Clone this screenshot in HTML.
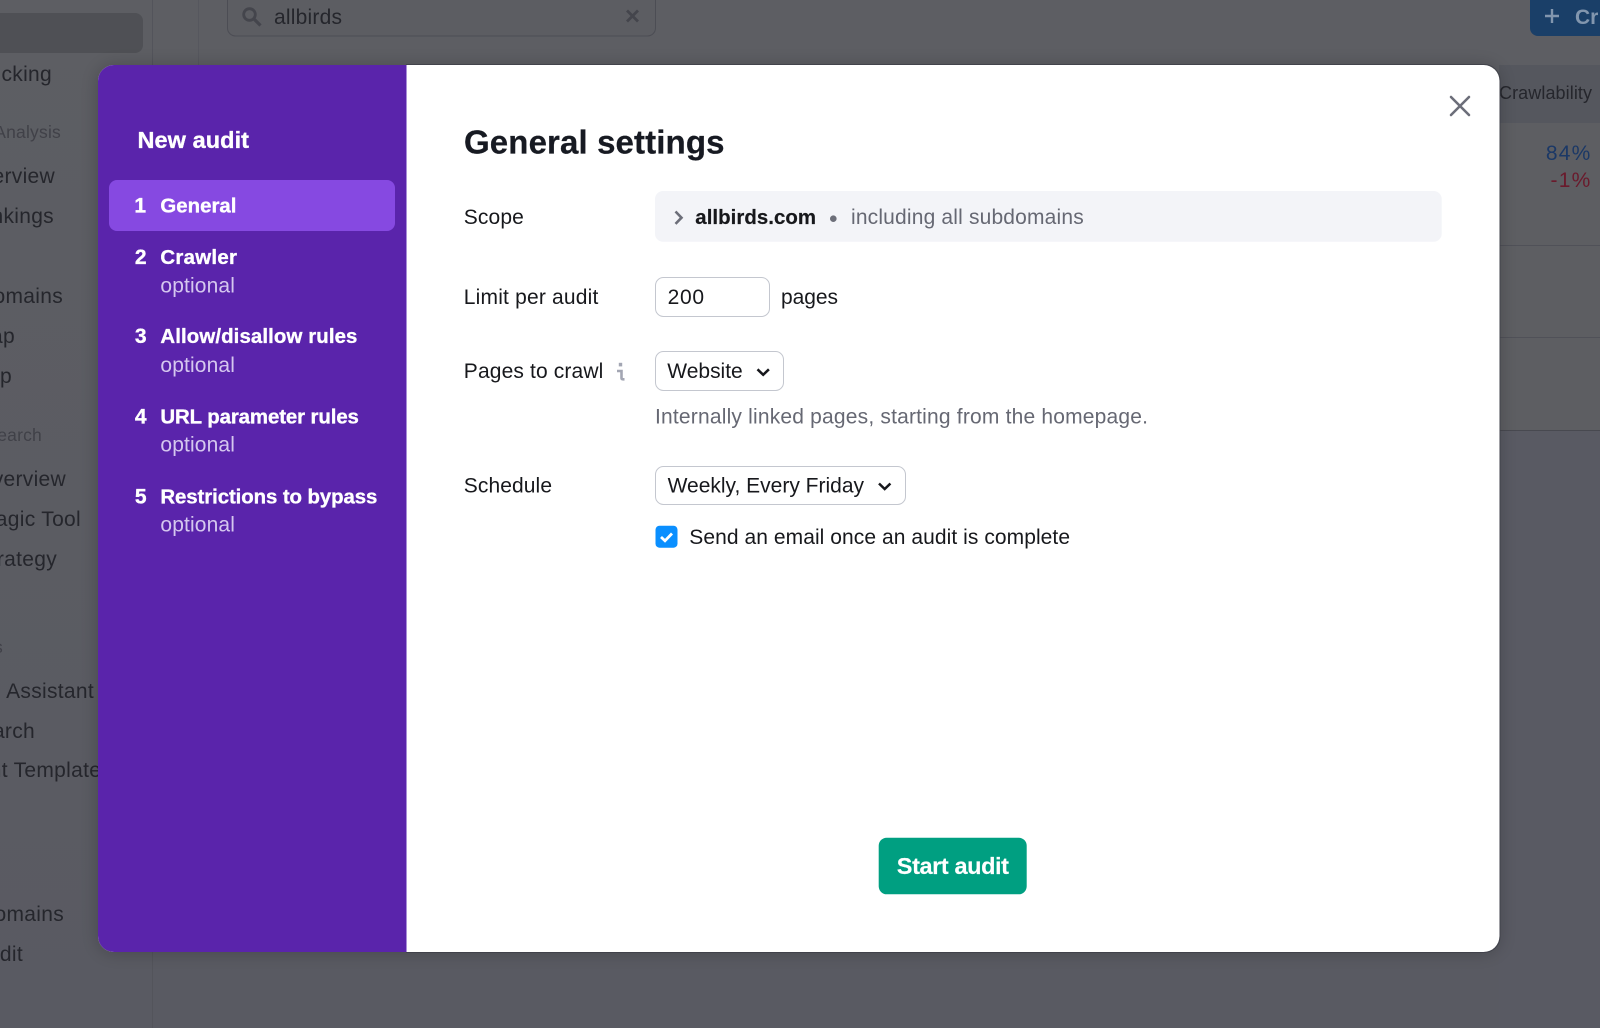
<!DOCTYPE html>
<html lang="en"><head><meta charset="utf-8"><title>New audit - General settings</title>
<style>
html,body{margin:0;padding:0;background:#5c5d62;width:1600px;height:1028px;overflow:hidden}
svg{display:block}
text{font-family:"Liberation Sans",sans-serif;font-size:21px;fill:#17181c}
.b{font-weight:700}
.w{fill:#fff;font-weight:700;font-size:20.400px;stroke:#fff;stroke-width:.35px}
.o{fill:#d5c7ef}
.g{fill:#666873}
.s{fill:#25262c;font-size:21px;letter-spacing:.3px;text-anchor:end}
.m{fill:#404148;font-size:17.500px;letter-spacing:.2px;text-anchor:end}
.d{font-size:21px;fill:#fff;font-weight:700;text-anchor:end;stroke:#fff;stroke-width:.35px}
</style></head><body>
<svg xmlns="http://www.w3.org/2000/svg" width="1600" height="1028" viewBox="0 0 1600 1028">
<defs>
<linearGradient id="bg" x1="0" y1="0" x2="0" y2="1"><stop offset="0" stop-color="#5d5e63"/><stop offset="1" stop-color="#595a62"/></linearGradient>
<filter id="sh" x="-5%" y="-5%" width="110%" height="110%"><feDropShadow dx="0" dy="1" stdDeviation="9" flood-color="#000" flood-opacity=".22"/></filter>
</defs>
<rect width="1600" height="1028" fill="url(#bg)"/>
<!-- background app -->
<rect x="1499" y="65" width="101" height="58" fill="#55575e"/>
<rect x="1499" y="123" width="101" height="307" fill="#5d5e62"/>
<rect x="1499" y="430" width="101" height="598" fill="#595a63"/>
<rect x="1499" y="245" width="101" height="1" fill="#505158"/>
<rect x="1499" y="337" width="101" height="1" fill="#505158"/>
<rect x="1499" y="430" width="101" height="1" fill="#484950"/>
<rect x="152" y="0" width="1" height="1028" fill="#53545b"/>
<rect x="198" y="0" width="1" height="66" fill="#56575e"/>
<rect x="-20" y="13" width="163" height="40" rx="8" fill="#4f5055"/>
<text class="s" x="52" y="81">cking</text>
<text class="m" x="61" y="138">Analysis</text>
<text class="s" x="55" y="183">erview</text>
<text class="s" x="54" y="223">nkings</text>
<text class="s" x="63" y="303">omains</text>
<text class="s" x="15" y="343">ap</text>
<text class="s" x="12" y="383">p</text>
<text class="m" x="42" y="441">earch</text>
<text class="s" x="66" y="486">verview</text>
<text class="s" x="81" y="526">agic Tool</text>
<text class="s" x="57" y="566">rategy</text>
<text class="m" x="3" y="653">s</text>
<text class="s" x="94" y="698">g Assistant</text>
<text class="s" x="35" y="738">arch</text>
<text class="s" x="112" y="777">nt Templates</text>
<text class="s" x="64" y="921">omains</text>
<text class="s" x="23" y="961">dit</text>
<!-- search -->
<rect x="227.500" y="-20" width="428" height="56" rx="8" fill="#5c5d62" stroke="#4c4d54"/>
<circle cx="249.500" cy="14.500" r="5.800" fill="none" stroke="#44454c" stroke-width="2.800"/>
<path d="M254 19l6.500 6.500" stroke="#44454c" stroke-width="3.200" fill="none"/>
<text x="274" y="24" textLength="68" style="fill:#25262c">allbirds</text>
<path d="M627 10.500l11 11M638 10.500l-11 11" stroke="#44454c" stroke-width="2.800" fill="none"/>
<!-- create button -->
<rect x="1530" y="-20" width="90" height="56" rx="8" fill="#1a3f68"/>
<path d="M1552 9v14M1545 16h14" stroke="#8296ae" stroke-width="2.400" fill="none"/>
<text x="1575" y="24" class="b" style="fill:#8296ae">Cr</text>
<text x="1499" y="99" textLength="93" style="font-size:18px;fill:#25262c">Crawlability</text>
<text x="1591.500" y="160" style="font-size:21px;fill:#1b3866;text-anchor:end;letter-spacing:1.200px">84%</text>
<text x="1591.500" y="187" style="font-size:21px;fill:#6a1a2c;text-anchor:end;letter-spacing:1.200px">-1%</text>
<!-- modal -->
<rect x="98" y="65" width="1401.500" height="887" rx="16" fill="#fff" filter="url(#sh)"/>
<path d="M406 64.500H1484a16 16 0 0 1 16 16V936.500a16 16 0 0 1-16 16H406" fill="none" stroke="#3c3d47" stroke-opacity=".75"/>
<path d="M406 65H114a16 16 0 0 0-16 16v855a16 16 0 0 0 16 16H406z" fill="#5a24ab"/>
<rect x="406" y="65" width="1" height="887" fill="#a98fd8"/>
<text class="w" x="137.500" y="148" textLength="111.500" style="font-size:23.500px">New audit</text>
<rect x="109" y="180" width="286" height="51" rx="8" fill="#8649e1"/>
<text class="d" x="146" y="212.500">1</text>
<text class="w" x="160.400" y="212.500" textLength="76">General</text>
<text class="d" x="146.500" y="264">2</text>
<text class="w" x="160.400" y="264" textLength="76.500">Crawler</text>
<text class="o" x="160.400" y="292.500" textLength="74.500">optional</text>
<text class="d" x="146.500" y="342.800">3</text>
<text class="w" x="160.400" y="342.800" textLength="197">Allow/disallow rules</text>
<text class="o" x="160.400" y="372" textLength="74.500">optional</text>
<text class="d" x="146.500" y="423.300">4</text>
<text class="w" x="160.400" y="423.300" textLength="198.500">URL parameter rules</text>
<text class="o" x="160.400" y="451.700" textLength="74.500">optional</text>
<text class="d" x="146.500" y="503.300">5</text>
<text class="w" x="160.400" y="503.300" textLength="217">Restrictions to bypass</text>
<text class="o" x="160.400" y="531.700" textLength="74.500">optional</text>
<!-- right pane -->
<text class="b" x="464" y="153.400" textLength="260.500" style="font-size:33px;fill:#171a22;stroke:#171a22;stroke-width:.25px">General settings</text>
<path d="M1451 97l18 18M1469 97l-18 18" stroke="#6c6e79" stroke-width="2.600" fill="none" stroke-linecap="round"/>
<text x="463.800" y="224" textLength="60">Scope</text>
<rect x="655" y="191" width="786.700" height="50.700" rx="8" fill="#f3f4f8"/>
<path d="M675.500 211.500l6 6.200-6 6.200" stroke="#6c6e79" stroke-width="2.600" fill="none"/>
<text class="b" x="695.300" y="224" textLength="120.700" style="font-size:20.400px;stroke:#17181c;stroke-width:.2px">allbirds.com</text>
<circle cx="833.300" cy="218.700" r="3.300" fill="#6c6e79"/>
<text class="g" x="851" y="224" textLength="232.700">including all subdomains</text>
<text x="463.800" y="304" textLength="134.500">Limit per audit</text>
<rect x="655.500" y="277.500" width="114" height="39" rx="8" fill="#fff" stroke="#c4c7cf"/>
<text x="667.600" y="304" textLength="36.500">200</text>
<text x="781" y="304" textLength="57">pages</text>
<text x="463.800" y="378" textLength="139.500">Pages to crawl</text>
<path d="M618.800 362.800h3.400v3.600h-3.400z" fill="#a3a6b3"/>
<path d="M617 371h4.500v7q0 1.300 1.500 1.300h1.500" stroke="#a3a6b3" stroke-width="2.600" fill="none"/>
<rect x="655.500" y="351.500" width="128" height="39" rx="8" fill="#fff" stroke="#c4c7cf"/>
<text x="667.300" y="378" textLength="75.400">Website</text>
<path d="M757.500 369.300l5.700 5.500 5.700-5.500" stroke="#17181c" stroke-width="2.500" fill="none"/>
<text class="g" x="655" y="423.300" textLength="493">Internally linked pages, starting from the homepage.</text>
<text x="463.800" y="492.700" textLength="88.200">Schedule</text>
<rect x="655.500" y="466.500" width="250" height="38" rx="8" fill="#fff" stroke="#c4c7cf"/>
<text x="667.600" y="492.700" textLength="196.400">Weekly, Every Friday</text>
<path d="M879 483.500l5.700 5.500 5.700-5.500" stroke="#17181c" stroke-width="2.500" fill="none"/>
<rect x="655.500" y="525.700" width="22" height="22" rx="4" fill="#0a8fff"/>
<path d="M661 537l4 3.800 7-7.300" stroke="#fff" stroke-width="2.800" fill="none"/>
<text x="689.300" y="544" textLength="380.700">Send an email once an audit is complete</text>
<rect x="878.700" y="837.700" width="148" height="56.600" rx="8" fill="#009f81"/>
<text class="w" x="896.800" y="874" textLength="112.200" style="font-size:23.500px;stroke-width:.15px">Start audit</text>
</svg>
</body></html>
